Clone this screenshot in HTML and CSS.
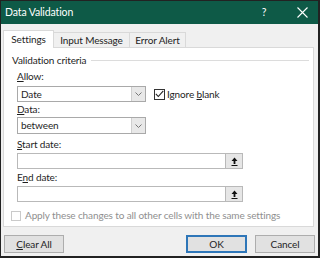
FILE: index.html
```html
<!DOCTYPE html>
<html lang="en">
<head>
    <meta charset="UTF-8">
    <title>Data Validation</title>
    <link rel="stylesheet" href="styles.css">
</head>
<body>
    <div class="dialog">
        <div class="titlebar">
            <span class="title">Data Validation</span>
            <span class="help">?</span>
            <span class="close">
                <svg width="11" height="11" viewBox="0 0 11 11"><path d="M0.5 0.5L10.5 10.5M10.5 0.5L0.5 10.5" stroke="#fff" stroke-width="1.1"/></svg>
            </span>
        </div>
        <div class="content">
            <div class="tabs">
                <div class="tab active">Settings</div>
                <div class="tab tab-input">Input Message</div>
                <div class="tab tab-error">Error Alert</div>
            </div>
            <div class="panel">
                <div class="group-title">
                    <span>Validation criteria</span>
                    <div class="rule"></div>
                </div>
                <div class="field">
                    <label class="lbl-allow"><u>A</u>llow:</label>
                    <div class="row">
                        <div class="select">
                            <span class="value">Date</span>
                            <span class="arrow"><svg width="7" height="4" viewBox="0 0 7 4"><path d="M0.5 0.5L3.5 3.5L6.5 0.5" fill="none" stroke="#777" stroke-width="1"/></svg></span>
                        </div>
                        <div class="check">
                            <span class="box"><svg width="9" height="8" viewBox="0 0 9 8"><path d="M0.8 3.8L3.3 6.5L8.3 0.8" fill="none" stroke="#222" stroke-width="1.1"/></svg></span>
                            <span>Ignore <u>b</u>lank</span>
                        </div>
                    </div>
                </div>
                <div class="field">
                    <label class="lbl-data"><u>D</u>ata:</label>
                    <div class="select select-data">
                        <span class="value">between</span>
                        <span class="arrow"><svg width="7" height="4" viewBox="0 0 7 4"><path d="M0.5 0.5L3.5 3.5L6.5 0.5" fill="none" stroke="#777" stroke-width="1"/></svg></span>
                    </div>
                </div>
                <div class="field">
                    <label class="lbl-start"><u>S</u>tart date:</label>
                    <div class="refedit">
                        <span class="ref-input"></span>
                        <span class="ref-btn"><svg width="7" height="9" viewBox="0 0 7 9"><path d="M3.5 0.5L0.5 4H2.6V7H4.4V4H6.5Z" fill="#111"/><rect x="0.5" y="8" width="6" height="1" fill="#111"/></svg></span>
                    </div>
                </div>
                <div class="field">
                    <label class="lbl-end">E<u>n</u>d date:</label>
                    <div class="refedit">
                        <span class="ref-input"></span>
                        <span class="ref-btn"><svg width="7" height="9" viewBox="0 0 7 9"><path d="M3.5 0.5L0.5 4H2.6V7H4.4V4H6.5Z" fill="#111"/><rect x="0.5" y="8" width="6" height="1" fill="#111"/></svg></span>
                    </div>
                </div>
                <div class="apply">
                    <span class="box disabled"></span>
                    <span>Apply these changes to all other cells with the same settings</span>
                </div>
            </div>
            <div class="buttons">
                <button class="btn"><u>C</u>lear All</button>
                <div class="spacer"></div>
                <button class="btn default">OK</button>
                <button class="btn">Cancel</button>
            </div>
        </div>
    </div>
</body>
</html>
```

FILE: styles.css
```css
body {
    margin: 0;
    font-family: Lato, "Noto Sans", sans-serif;
    font-size: 10px;
    line-height: 13px;
    letter-spacing: -0.12px;
    color: #1e1e1e;
}
u {
    text-decoration-thickness: 1px;
    text-underline-offset: 1px;
}
.dialog {
    width: 320px;
    height: 258px;
    box-sizing: border-box;
    border: 1px solid #222;
    border-right-width: 2px;
    border-bottom-width: 2px;
    background-color: #f0f0f0;
    display: flex;
    flex-direction: column;
}
.titlebar {
    height: 23px;
    background-color: #0e5a47;
    color: #fff;
    display: flex;
    align-items: center;
    padding-left: 4px;
    font-size: 10.5px;
    flex-shrink: 0;
}
.title {
    flex: 1;
}
.help {
    width: 12px;
    text-align: center;
    margin-right: 26px;
}
.close {
    width: 12px;
    display: flex;
    justify-content: center;
    margin-right: 10px;
}
.content {
    padding: 6px 0 0 2px;
    display: flex;
    flex-direction: column;
}
.tabs {
    display: flex;
    height: 17px;
    align-items: flex-end;
    position: relative;
    z-index: 1;
}
.tab {
    height: 15px;
    border: 1px solid #d9d9d9;
    border-bottom: none;
    display: flex;
    align-items: center;
    justify-content: center;
    background-color: #f0f0f0;
    box-sizing: border-box;
}
.tab.active {
    width: 51px;
    height: 18px;
    background-color: #fff;
    margin-bottom: -1px;
}
.tab-input {
    width: 76px;
    border-left: none;
}
.tab-error {
    width: 57px;
    margin-left: -1px;
}
.panel {
    width: 311px;
    height: 180px;
    background-color: #fff;
    border: 1px solid #d9d9d9;
    box-sizing: border-box;
    padding: 6px 4px 0 8px;
}
.group-title {
    display: flex;
    align-items: center;
    gap: 5px;
}
.rule {
    flex: 1;
    height: 1px;
    background-color: #dcdcdc;
}
.field {
    padding-left: 5px;
}
.field label {
    display: block;
}
.lbl-allow {
    margin-top: 3px;
}
.lbl-data {
    margin-top: 1px;
}
.lbl-start {
    margin-top: 4px;
}
.lbl-end {
    margin-top: 2px;
}
.row {
    display: flex;
    align-items: center;
    gap: 8px;
    margin-top: 3px;
}
.select {
    width: 129px;
    height: 16px;
    box-sizing: border-box;
    border: 1px solid #a9a9a9;
    display: flex;
    align-items: center;
    padding-left: 3px;
}
.select-data {
    height: 17px;
    margin-top: 1px;
}
.value {
    flex: 1;
}
.arrow {
    width: 13px;
    align-self: stretch;
    background-color: #e8e8e8;
    border-left: 1px solid #cfcfcf;
    display: flex;
    align-items: center;
    justify-content: center;
}
.check {
    display: flex;
    align-items: center;
    gap: 2px;
}
.box {
    width: 11px;
    height: 11px;
    box-sizing: border-box;
    border: 1px solid #333;
    display: flex;
    align-items: center;
    justify-content: center;
    background-color: #fff;
}
.box.disabled {
    width: 10px;
    height: 10px;
    border-color: #cacaca;
}
.refedit {
    display: flex;
    width: 226px;
    height: 16px;
    margin-top: 2px;
}
.ref-input {
    flex: 1;
    border: 1px solid #b9b9b9;
    border-right: none;
}
.ref-btn {
    width: 18px;
    box-sizing: border-box;
    border: 1px solid #b9b9b9;
    background-color: #e6e6e6;
    display: flex;
    align-items: center;
    justify-content: center;
}
.apply {
    display: flex;
    align-items: center;
    gap: 4px;
    margin-top: 7px;
    margin-left: -1px;
    color: #8f8f8f;
}
.buttons {
    display: flex;
    gap: 8px;
    margin-top: 8px;
    padding-left: 1px;
    padding-right: 3px;
}
.spacer {
    flex: 1;
}
.btn {
    font-family: inherit;
    font-size: 10px;
    letter-spacing: inherit;
    color: #1e1e1e;
    width: 60px;
    height: 18px;
    padding: 0;
    border: 1px solid #adadad;
    background-color: #e1e1e1;
}
.btn.default {
    width: 61px;
    border: 2px solid #2e76b8;
}
```
